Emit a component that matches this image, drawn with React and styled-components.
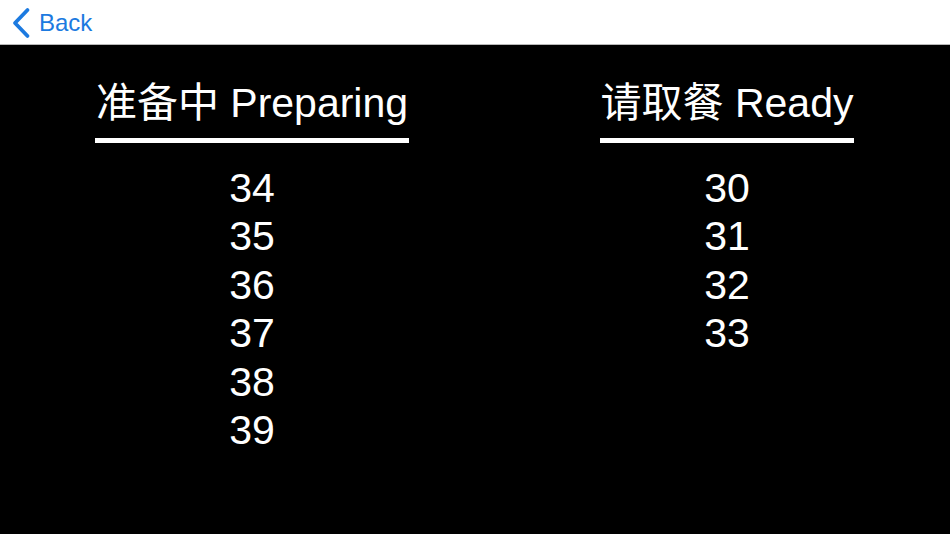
import React from "react";
import styled, { createGlobalStyle } from "styled-components";

const Global = createGlobalStyle`
  html, body { margin: 0; padding: 0; background: #000; }
  body { font-family: "Liberation Sans", "Noto Sans CJK SC", sans-serif; }
`;

const Page = styled.div`
  width: 950px;
  height: 534px;
  display: flex;
  flex-direction: column;
  background: #000;
  overflow: hidden;
`;

const NavBar = styled.div`
  height: 44px;
  flex: none;
  background: #fff;
  border-bottom: 1px solid #b8b8b8;
  display: flex;
  align-items: center;
  padding-left: 11px;
`;

const BackButton = styled.button`
  display: flex;
  align-items: center;
  gap: 8px;
  background: none;
  border: none;
  padding: 0;
  color: #1c7ae0;
  font-family: "Liberation Sans", sans-serif;
  font-size: 24px;
  cursor: pointer;
  margin-top: 1px;
`;

const Board = styled.div`
  flex: 1;
  display: grid;
  grid-template-columns: 504px 1fr;
  padding-top: 34px;
`;

const Column = styled.div`
  display: flex;
  flex-direction: column;
  align-items: center;
`;

const Heading = styled.div`
  color: #fff;
  font-family: "Liberation Sans", "Noto Sans CJK SC", sans-serif;
  font-size: 41px;
  line-height: 48px;
  height: 48px;
  padding: 0 1px 11px;
  border-bottom: 5px solid #fff;
  white-space: nowrap;
`;

const List = styled.div`
  margin-top: 21px;
  display: flex;
  flex-direction: column;
  align-items: center;
`;

const Num = styled.div`
  color: #fff;
  font-family: "Liberation Sans", sans-serif;
  font-size: 41px;
  line-height: 48.4px;
`;

const Chevron = () => (
  <svg width="20" height="32" viewBox="0 0 20 32">
    <path
      d="M16.5 3 L4 16 L16.5 29"
      fill="none"
      stroke="#1c7ae0"
      strokeWidth="3.8"
      strokeLinecap="round"
      strokeLinejoin="round"
    />
  </svg>
);

const preparing = [34, 35, 36, 37, 38, 39];
const ready = [30, 31, 32, 33];

export default function App() {
  return (
    <Page>
      <Global />
      <NavBar>
        <BackButton>
          <Chevron />
          Back
        </BackButton>
      </NavBar>
      <Board>
        <Column>
          <Heading>准备中 Preparing</Heading>
          <List>
            {preparing.map((n) => (
              <Num key={n}>{n}</Num>
            ))}
          </List>
        </Column>
        <Column>
          <Heading>请取餐 Ready</Heading>
          <List>
            {ready.map((n) => (
              <Num key={n}>{n}</Num>
            ))}
          </List>
        </Column>
      </Board>
    </Page>
  );
}
